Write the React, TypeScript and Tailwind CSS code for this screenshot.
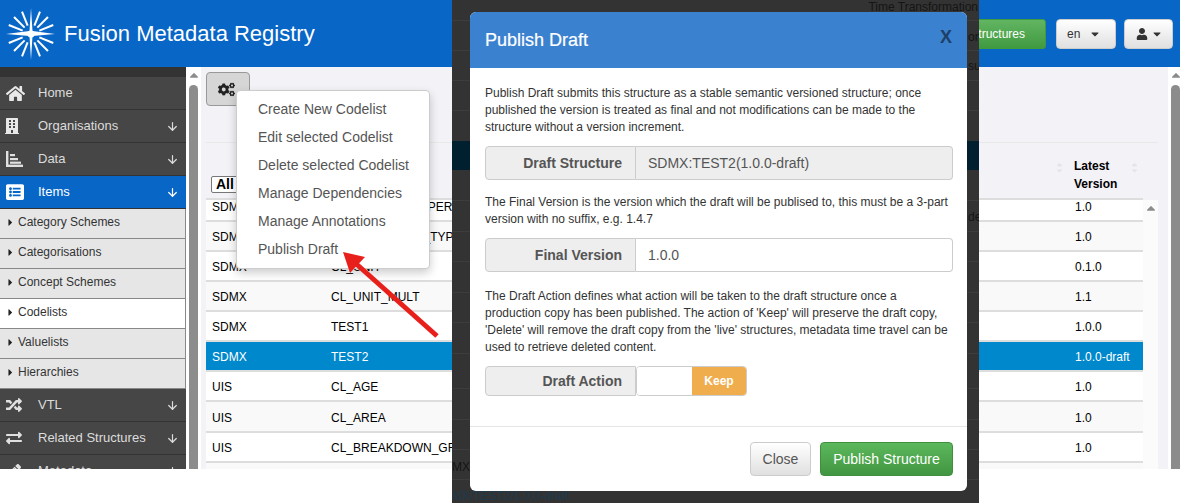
import { ArrowDown } from "lucide-react";
import { FaCaretDown, FaCaretRight, FaCaretUp, FaCogs, FaExchangeAlt, FaHome, FaListAlt, FaPencilAlt, FaRandom, FaUser, FaBuilding } from "react-icons/fa";

const subItems = ["Category Schemes", "Categorisations", "Concept Schemes", "Codelists", "Valuelists", "Hierarchies"];

const menuItems = [
  "Create New Codelist",
  "Edit selected Codelist",
  "Delete selected Codelist",
  "Manage Dependencies",
  "Manage Annotations",
  "Publish Draft",
];

const rows = [
  { agency: "SDMX", id: "CL_GENDER_SUPERSET", version: "1.0" },
  { agency: "SDMX", id: "CL_OBS_VALUE_TYPE", version: "1.0" },
  { agency: "SDMX", id: "CL_UNIT", version: "0.1.0" },
  { agency: "SDMX", id: "CL_UNIT_MULT", version: "1.1" },
  { agency: "SDMX", id: "TEST1", version: "1.0.0" },
  { agency: "SDMX", id: "TEST2", version: "1.0.0-draft" },
  { agency: "UIS", id: "CL_AGE", version: "1.0" },
  { agency: "UIS", id: "CL_AREA", version: "1.0" },
  { agency: "UIS", id: "CL_BREAKDOWN_GROUP", version: "1.0" },
  { agency: "UIS", id: "CL_COUNTRY", version: "1.0" },
];

const Logo = () => {
  const angles = [22, 45, 68, 112, 135, 158, 202, 225, 248, 292, 315, 338];
  return (
    <svg width="50" height="52" viewBox="0 0 50 52" className="shrink-0">
      <g stroke="#fff" strokeWidth="2" strokeLinecap="butt">
        {angles.map((a) => {
          const r = (a * Math.PI) / 180;
          return <line key={a} x1={25 + Math.cos(r) * 9} y1={26 + Math.sin(r) * 9} x2={25 + Math.cos(r) * 24} y2={26 + Math.sin(r) * 24} />;
        })}
      </g>
      <polygon points="25,0 26.5,23 49,26 26.5,28 25,52 23.5,28 0,26 23.5,23" fill="#fff" />
      <circle cx="25" cy="26" r="3.5" fill="#fff" />
    </svg>
  );
};

const StatsIcon = () => (
  <svg width="17" height="16" viewBox="0 0 17 16" fill="#e0e0e0">
    <rect x="0" y="0" width="2.4" height="16" />
    <rect x="0" y="13.6" width="17" height="2.4" />
    <rect x="4" y="3" width="5" height="2.2" />
    <rect x="4" y="7" width="8" height="2.2" />
    <rect x="4" y="10.6" width="11" height="2.2" />
  </svg>
);

const NavItem = ({ icon, label, arrow = true, active = false }: { icon: React.ReactNode; label: string; arrow?: boolean; active?: boolean }) => (
  <div className={`flex h-[33px] shrink-0 items-center border-b border-[#333] pl-[6px] pr-[7px] text-[13px] ${active ? "bg-[#0866c6] text-white" : "bg-[#464646] text-[#dcdcdc]"}`}>
    <span className="flex w-[32px] items-center">{icon}</span>
    <span className="flex-1">{label}</span>
    {arrow && <ArrowDown size={13} strokeWidth={2.2} />}
  </div>
);

const Sidebar = () => (
  <aside className="flex h-full w-[186px] shrink-0 flex-col overflow-hidden bg-[#333] pt-[10px]">
    <NavItem icon={<FaHome size={19} color="#e8e8e8" />} label="Home" arrow={false} />
    <NavItem icon={<FaBuilding size={16} color="#e8e8e8" className="-ml-[2px]" />} label="Organisations" />
    <NavItem icon={<StatsIcon />} label="Data" />
    <NavItem icon={<FaListAlt size={18} color="#fff" />} label="Items" active />
    {subItems.map((s) => (
      <div key={s} className={`flex h-[30px] shrink-0 items-center gap-[2px] border-r border-b border-[#888] pb-[3px] pl-[5px] text-[12px] text-[#333] ${s === "Codelists" ? "bg-white" : "bg-[#e6e6e6]"}`}>
        <FaCaretRight size={11} color="#222" />
        {s}
      </div>
    ))}
    <NavItem icon={<FaRandom size={16} color="#e0e0e0" />} label="VTL" />
    <NavItem icon={<FaExchangeAlt size={16} color="#e0e0e0" />} label="Related Structures" />
    <NavItem icon={<FaPencilAlt size={15} color="#e0e0e0" />} label="Metadata" />
  </aside>
);

const PageScrollbar = ({ className }: { className: string }) => (
  <div className={`flex h-full shrink-0 flex-col items-center bg-white ${className}`}>
    <FaCaretUp size={14} color="#8c8c8c" className="mt-[1px] h-[14px] shrink-0" />
    <div className="mt-[3px] w-[9px] flex-1 rounded-t-[5px] bg-[#8c8c8c]" />
  </div>
);

const SortIcon = () => (
  <span className="flex flex-col text-[#e4e4e4]">
    <FaCaretUp size={9} className="-mb-[3px]" />
    <FaCaretDown size={9} />
  </span>
);

const TableRow = ({ row, index }: { row: (typeof rows)[number]; index: number }) => {
  const selected = row.id === "TEST2";
  const stripe = index % 2 === 1 ? "bg-[#f9f9f9]" : "bg-white";
  return (
    <div className={`flex shrink-0 items-center border-b-2 border-[#ddd] pt-[2px] pl-[6px] text-[12px] ${index === 0 ? "-mt-[8px]" : ""} ${row.id === "CL_AREA" ? "h-[31px]" : "h-[30px]"} ${selected ? "bg-[#0088cc] text-white" : `${stripe} text-black`}`}>
      <span className="w-[119px]">{row.agency}</span>
      <span className="flex-1 whitespace-nowrap">{row.id}</span>
      <span className="w-[68px]">{row.version}</span>
    </div>
  );
};

const Main = () => (
  <main className="relative flex h-full w-[967px] shrink-0 flex-col bg-[#f2f2f7] pl-[5px] pr-[10px] pt-[5px]">
    <button className="flex h-[34px] w-[44px] items-center justify-center rounded-[4px] border border-[#999] bg-[#d6d6d6] pr-[3px]">
      <FaCogs size={17} color="#222" />
    </button>
    <div className="mt-[36px] h-px shrink-0 bg-[#e8e8e8]" />
    <div className="mr-[15px] flex h-[57px] shrink-0 border-b-2 border-[#ddd]">
      <div className="flex-1 pl-[5px] pt-[33px]">
        <span className="flex h-[17px] w-[40px] items-center rounded-[2px] border border-[#777] bg-white pl-[4px] text-[14px] font-bold text-black">All</span>
      </div>
      <div className="mt-[17px] mr-[10px] h-[14px]">
        <SortIcon />
      </div>
      <div className="flex w-[69px] shrink-0 justify-between pr-[4px] pt-[14px] text-[12px] leading-[18px] font-bold text-black">
        <span>
          Latest
          <br />
          Version
        </span>
        <span className="pt-[3px]">
          <SortIcon />
        </span>
      </div>
    </div>
    <div className="flex min-h-0 flex-1">
      <div className="flex min-w-0 flex-1 flex-col overflow-hidden">
        {rows.map((r, i) => (
          <TableRow key={r.id} row={r} index={i} />
        ))}
      </div>
      <div className="flex w-[15px] shrink-0 justify-center bg-[#fbfbfb]">
        <FaCaretUp size={14} color="#8c8c8c" className="mt-[1px]" />
      </div>
    </div>
    {/* actions dropdown */}
    <div className="absolute top-[23px] left-[35px] z-10 flex h-[179px] w-[194px] flex-col rounded-[4px] border border-[#ccc] bg-white py-[5px] shadow-[0_4px_10px_rgba(0,0,0,0.2)]">
      {menuItems.map((m) => (
        <div key={m} className="flex h-[28px] items-center pl-[21px] text-[14px] text-[#555]">
          {m}
        </div>
      ))}
    </div>
  </main>
);

const Header = () => (
  <header className="flex h-[67px] shrink-0 items-center bg-[#0866c6] pl-[6px] pr-[7px] text-white">
    <Logo />
    <span className="ml-[8px] text-[22px]">Fusion Metadata Registry</span>
    <button className="ml-auto flex h-[30px] w-[150px] items-center justify-end rounded-[3px] border border-[#3f9a3f] bg-linear-to-b from-[#62b562] to-[#409a40] pr-[20px] text-[12px] text-white">
      Structures
    </button>
    <button className="ml-[10px] flex h-[30px] w-[60px] items-center justify-between rounded-[4px] border border-[#ccc] bg-linear-to-b from-white to-[#e0e0e0] pl-[10px] pr-[14px] text-[12px] text-[#333]">
      en
      <FaCaretDown size={12} color="#333" />
    </button>
    <button className="ml-[8px] flex h-[30px] w-[49px] items-center justify-between rounded-[4px] border border-[#ccc] bg-linear-to-b from-white to-[#e0e0e0] pl-[11px] pr-[9px]">
      <FaUser size={12} color="#333" />
      <FaCaretDown size={12} color="#333" />
    </button>
  </header>
);

const FieldRow = ({ label, children, className = "" }: { label: string; children: React.ReactNode; className?: string }) => (
  <div className={`flex text-[14px] ${className}`}>
    <div className="flex w-[151px] shrink-0 items-center justify-end rounded-l-[4px] border border-[#ccc] bg-[#eee] pr-[13px] font-bold text-[#555]">{label}</div>
    {children}
  </div>
);

const PublishModal = () => (
  <div className="ml-[18px] mt-[12px] flex h-[479px] w-[497px] flex-col overflow-hidden rounded-[6px] bg-white text-[12px] leading-[17px] text-[#333]">
    <div className="flex h-[56px] shrink-0 items-center justify-between bg-[#3a82d0] px-[15px] text-white">
      <span className="text-[18px] [-webkit-text-stroke:0.2px_white]">Publish Draft</span>
      <span className="-mt-[5px] text-[18px] font-bold text-[#1e3f66]">X</span>
    </div>
    <div className="flex-1 pl-[15px] pr-[14px] pt-[17px]">
      <p>
        Publish Draft submits this structure as a stable semantic versioned structure; once published the version is treated as final and not modifications can be made to the structure without a version increment.
      </p>
      <FieldRow label="Draft Structure" className="mt-[10px] h-[34px]">
        <div className="flex flex-1 items-center rounded-r-[4px] border border-l-0 border-[#ccc] bg-[#eee] pl-[12px] text-[#555]">SDMX:TEST2(1.0.0-draft)</div>
      </FieldRow>
      <p className="mt-[14px]">The Final Version is the version which the draft will be publised to, this must be a 3-part version with no suffix, e.g. 1.4.7</p>
      <FieldRow label="Final Version" className="mt-[10px] h-[34px]">
        <div className="flex flex-1 items-center rounded-r-[4px] border border-l-0 border-[#ccc] bg-white pl-[12px] text-[#555]">1.0.0</div>
      </FieldRow>
      <p className="mt-[16px]">
        The Draft Action defines what action will be taken to the draft structure once a production copy has been published. The action of 'Keep' will preserve the draft copy, 'Delete' will remove the draft copy from the 'live' structures, metadata time travel can be used to retrieve deleted content.
      </p>
      <FieldRow label="Draft Action" className="mt-[10px] h-[30px]">
        <div className="flex w-[111px] overflow-hidden rounded-[4px] border border-[#ccc]">
          <div className="w-[55px] bg-white" />
          <div className="flex flex-1 items-center justify-center bg-[#f0ad4e] text-[12px] font-bold text-white">Keep</div>
        </div>
      </FieldRow>
    </div>
    <div className="flex h-[65px] shrink-0 items-start justify-end gap-[9px] border-t border-[#e5e5e5] px-[14px] pt-[15px] text-[14px]">
      <button className="h-[34px] w-[61px] rounded-[4px] border border-[#ccc] bg-linear-to-b from-white to-[#e0e0e0] text-[#555]">Close</button>
      <button className="h-[34px] w-[133px] rounded-[4px] border border-[#3e8f3e] bg-linear-to-b from-[#5cb85c] to-[#419641] text-white">Publish Structure</button>
    </div>
  </div>
);

// the darkened backdrop strip from the pasted dialog shot
const BackdropStrip = () => (
  <div className="absolute inset-y-0 left-[452px] z-20 w-[527px] overflow-hidden bg-[#333] text-[12px]">
    <div className="absolute inset-x-0 top-[141px] h-[29px] bg-[#00202f]" />
    {[20, 50, 80, 110, 200, 231, 261, 292, 322, 353, 388, 419, 449, 479].map((y) => (
      <div key={y} className="absolute inset-x-0 h-px bg-[#3d3d3d]" style={{ top: y }} />
    ))}
    <span className="absolute top-[-2px] right-[1px] text-[#151515]">Time Transformation</span>
    <span className="absolute top-[28px] right-0 w-[11px] overflow-hidden text-[#151515]">on</span>
    <span className="absolute top-[57px] right-0 w-[11px] overflow-hidden text-[#151515]">su</span>
    <span className="absolute top-[208px] right-0 w-[11px] overflow-hidden text-[#151515]">de</span>
    <span className="absolute top-[458px] left-0 text-[#151515]">MX:T</span>
    <span className="absolute top-[487px] left-0 text-[#1d3a4f]">MX/TEST2/1.0.0-draft</span>
    <div className="relative">
      <PublishModal />
    </div>
  </div>
);

const RedArrow = () => (
  <svg width="110" height="100" viewBox="0 0 110 100" className="absolute top-[245px] left-[335px] z-10">
    <line x1="102" y1="91" x2="18" y2="16" stroke="#e8201c" strokeWidth="5" />
    <polygon points="8,7 30,12 15,28" fill="#e8201c" />
  </svg>
);

export default function App() {
  return (
    <div className="relative h-[503px] w-[1180px] overflow-hidden bg-white font-['Liberation_Sans',Arial,sans-serif]">
      <div className="flex h-[469px] flex-col overflow-hidden">
        <Header />
        <div className="flex h-[402px]">
          <Sidebar />
          <PageScrollbar className="w-[15px]" />
          <Main />
          <PageScrollbar className="w-[12px] pl-[3px]" />
        </div>
      </div>
      <RedArrow />
      <BackdropStrip />
    </div>
  );
}
